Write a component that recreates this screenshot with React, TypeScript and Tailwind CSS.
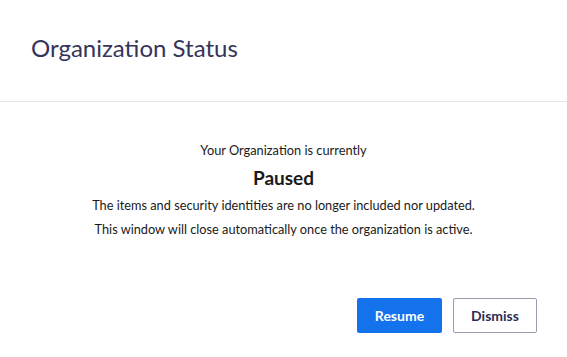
import React from "react";

export default function App() {
  return (
    <div className="w-[567px] h-[357px] bg-white flex flex-col" style={{ fontFamily: "Lato, 'Noto Sans', sans-serif" }}>
      <div className="h-[102px] border-b border-[#e6e6e6] pl-[31px] pt-[32px]">
        <h1 className="text-[24px] leading-[32px] font-normal text-[#34345c]">Organization Status</h1>
      </div>
      <div className="flex flex-col items-center text-[#1a1a1a] pt-[38px]">
        <p className="text-[12.8px] leading-[20px]">Your Organization is currently</p>
        <p className="text-[19px] leading-[24px] font-bold mt-[6px]">Paused</p>
        <p className="text-[12.75px] leading-[20px] mt-[5px]">The items and security identities are no longer included nor updated.</p>
        <p className="text-[12.75px] leading-[20px] mt-[4px]">This window will close automatically once the organization is active.</p>
      </div>
      <div className="flex justify-end gap-[11px] pr-[30px] mt-[59px]">
        <button className="w-[85px] h-[35px] rounded-[2px] bg-[#1372ec] text-white text-[14px] font-bold">Resume</button>
        <button className="w-[84px] h-[35px] rounded-[2px] border border-[#9a9ab0] bg-white text-[#2d2d55] text-[14px] font-bold">Dismiss</button>
      </div>
    </div>
  );
}
